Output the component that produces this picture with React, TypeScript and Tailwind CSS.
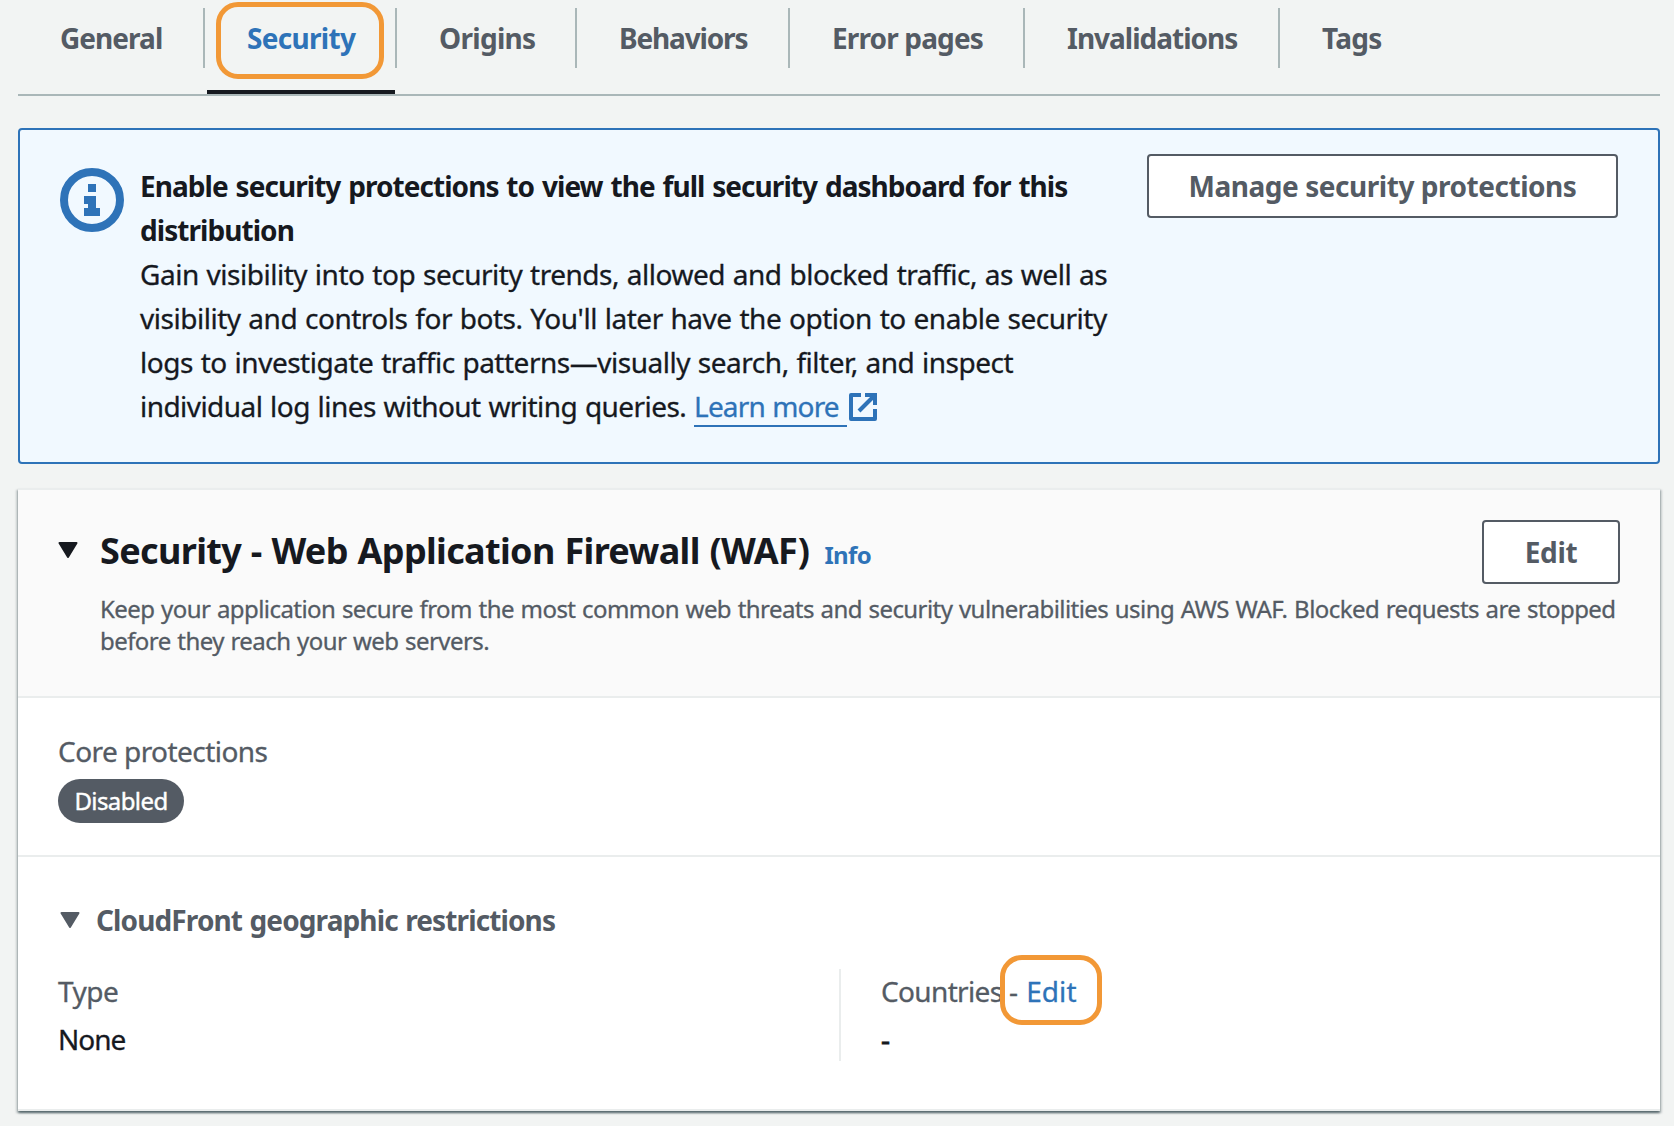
import type { ReactNode } from "react";

const tabs = [
  { label: "General", width: "w-[187px]", tracking: "tracking-[-0.95px]" },
  { label: "Security", width: "w-[192px]", tracking: "tracking-[-0.7px]", active: true },
  { label: "Origins", width: "w-[180px]", tracking: "tracking-[-0.7px]" },
  { label: "Behaviors", width: "w-[213px]", tracking: "tracking-[-1.15px]" },
  { label: "Error pages", width: "w-[235px]", tracking: "tracking-[-0.85px]" },
  { label: "Invalidations", width: "w-[255px]", tracking: "tracking-[-1px]" },
  { label: "Tags", width: "w-[160px]", tracking: "tracking-[-0.7px]" },
];

function InfoIcon() {
  return (
    <svg className="block size-16 shrink-0" viewBox="0 0 64 64" fill="none">
      <circle cx="32" cy="32" r="28" stroke="#2e73b8" strokeWidth="8" />
      <path d="M28 16h8v8h-8zM24 28h12v12h4v8H24v-8h4v-4h-4z" fill="#2e73b8" />
    </svg>
  );
}

function ExternalIcon() {
  return (
    <svg className="ml-[2px] inline-block h-7 w-7 align-[-4px]" viewBox="0 0 28 28" fill="none">
      <path d="M12 2H2v24h24V16" stroke="#2e73b8" strokeWidth="4" strokeLinejoin="round" />
      <path d="M16 2h10v10" stroke="#2e73b8" strokeWidth="4" />
      <path d="M26 2L10 18" stroke="#2e73b8" strokeWidth="4" />
    </svg>
  );
}

function Caret({ className }: { className: string }) {
  return (
    <svg className={className} viewBox="0 0 20 16">
      <path d="M1.5 1h17L10 15z" fill="currentColor" stroke="currentColor" strokeWidth="2" strokeLinejoin="round" />
    </svg>
  );
}

function Button({ children, className }: { children: ReactNode; className: string }) {
  return (
    <button
      className={`h-16 shrink-0 rounded-[4px] border-2 border-[#545b64] bg-white text-center text-[28px] leading-[60px] font-bold whitespace-nowrap text-[#545b64] ${className}`}
    >
      {children}
    </button>
  );
}

export default function App() {
  return (
    <div className="h-[1126px] w-[1674px] overflow-hidden bg-[#f2f4f3] pr-[14px] pl-[18px] font-['Noto_Sans',sans-serif] text-[28px] text-[#16191f]">
      <nav className="flex h-24 border-b-2 border-[#aab7b8] pt-2">
        {tabs.map((tab, i) => (
          <div key={tab.label} className={`relative h-[86px] ${tab.width}`}>
            <div
              className={`h-[60px] pl-[42px] leading-[60px] font-bold ${tab.tracking} ${
                tab.active ? "text-[#2e73b8]" : "text-[#545b64]"
              } ${i < tabs.length - 1 ? "border-r-2 border-[#aab7b8]" : ""}`}
            >
              {tab.label}
            </div>
            {tab.active && (
              <>
                <div className="absolute top-[-6px] left-[11px] h-[77px] w-[168px] rounded-[22px] border-[5px] border-[#f29836]" />
                <div className="absolute bottom-0 left-[2px] h-1 w-[188px] bg-[#16191f]" />
              </>
            )}
          </div>
        ))}
      </nav>

      <section className="mt-8 flex h-[336px] rounded-[4px] border-2 border-[#2e73b8] bg-[#f1f9ff] px-10 pt-6">
        <div className="mt-[14px]">
          <InfoIcon />
        </div>
        <div className="mt-[10px] ml-4 w-0 flex-1 leading-[44px] whitespace-nowrap">
          <h3 className="font-bold tracking-[-0.95px] [word-spacing:1.5px]">
            Enable security protections to view the full security dashboard for this
            <br />
            distribution
          </h3>
          <p className="tracking-[-0.48px] [-webkit-text-stroke:0.3px] [word-spacing:1px]">
            Gain visibility into top security trends, allowed and blocked traffic, as well as
            <br />
            visibility and controls for bots. You'll later have the option to enable security
            <br />
            logs to investigate traffic patterns—visually search, filter, and inspect
            <br />
            <span className="tracking-[-0.55px]">individual log lines without writing queries. </span>
            <a className="text-[#2e73b8]">
              <span className="border-b-2 border-[#2e73b8] pr-[8px] tracking-[-0.85px]">Learn more</span>
              <ExternalIcon />
            </a>
          </p>
        </div>
        <Button className="w-[471px] tracking-[-0.46px]">Manage security protections</Button>
      </section>

      <section className="mt-6 h-[623px] border-y-2 border-[#eaeded] bg-white shadow-[0_2px_2px_0_rgba(0,28,36,0.5),2px_2px_2px_0_rgba(0,28,36,0.15),-2px_2px_2px_0_rgba(0,28,36,0.15)]">
        <header className="flex h-[208px] border-b-2 border-[#eaeded] bg-[#fafafa] px-10">
          <Caret className="mt-[52px] h-4 w-5 shrink-0" />
          <div className="ml-[22px] w-0 flex-1">
            <div className="flex h-[94px] justify-between">
              <div className="mt-[37px] flex items-baseline leading-[48px] whitespace-nowrap">
                <h2 className="text-[36px] font-bold tracking-[-0.65px] [word-spacing:1px]">
                  Security - Web Application Firewall (WAF)
                </h2>
                <a className="ml-[15px] text-[24px] font-bold tracking-[-0.6px] text-[#2e73b8]">Info</a>
              </div>
              <Button className="mt-[30px] w-[138px] tracking-[-0.4px]">Edit</Button>
            </div>
            <p className="mt-[9px] text-[24px] leading-8 tracking-[-0.57px] whitespace-nowrap text-[#545b64] [-webkit-text-stroke:0.3px] [word-spacing:1px]">
              Keep your application secure from the most common web threats and security vulnerabilities using AWS WAF. Blocked requests are stopped
              <br />
              before they reach your web servers.
            </p>
          </div>
        </header>

        <div className="h-[159px] border-b-2 border-[#eaeded] pt-[31px] pl-10">
          <div className="tracking-[-0.55px] text-[#545b64] [-webkit-text-stroke:0.3px] leading-[44px]">
            Core protections
          </div>
          <div className="mt-[6px] h-11 w-[126px] rounded-[22px] bg-[#545b64] text-center text-[24px] leading-[44px] tracking-[-0.6px] text-white [-webkit-text-stroke:0.4px]">
            Disabled
          </div>
        </div>

        <div className="pt-[41px] pl-10">
          <div className="flex items-center font-bold text-[#545b64]">
            <Caret className="ml-[2px] h-4 w-5" />
            <h3 className="ml-4 leading-[44px] tracking-[-0.88px] [word-spacing:1px]">
              CloudFront geographic restrictions
            </h3>
          </div>
          <div className="mt-[27px] flex h-[92px] leading-[44px] [-webkit-text-stroke:0.3px]">
            <div className="w-[783px] border-r-2 border-[#eaeded]">
              <div className="tracking-[-0.5px] text-[#545b64]">Type</div>
              <div className="mt-1 tracking-[-1px]">None</div>
            </div>
            <div className="relative pl-[40px] whitespace-nowrap">
              <div className="tracking-[-0.65px] text-[#545b64]">
                Countries - <a className="ml-[2px] tracking-[0.1px] text-[#2e73b8]">Edit</a>
              </div>
              <div className="mt-1 [-webkit-text-stroke:0.8px]">-</div>
              <div className="absolute top-[-14px] left-[159px] h-[70px] w-[102px] rounded-[22px] border-[5px] border-[#f29836]" />
            </div>
          </div>
        </div>
      </section>
    </div>
  );
}
